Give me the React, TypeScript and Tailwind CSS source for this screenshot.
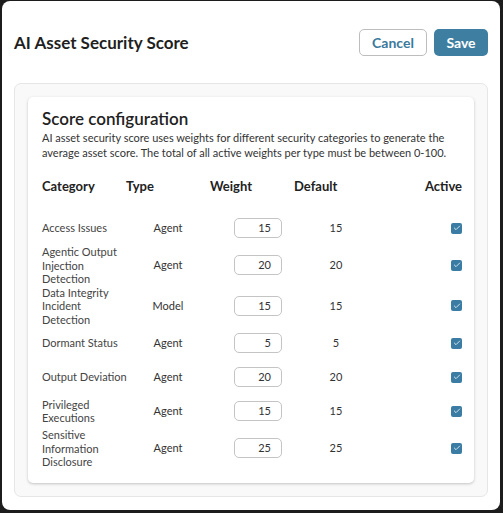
import { Check } from "lucide-react";

type Row = {
  category: string[];
  type: string;
  weight: number;
  def: number;
};

const rows: Row[] = [
  { category: ["Access Issues"], type: "Agent", weight: 15, def: 15 },
  { category: ["Agentic Output", "Injection", "Detection"], type: "Agent", weight: 20, def: 20 },
  { category: ["Data Integrity", "Incident", "Detection"], type: "Model", weight: 15, def: 15 },
  { category: ["Dormant Status"], type: "Agent", weight: 5, def: 5 },
  { category: ["Output Deviation"], type: "Agent", weight: 20, def: 20 },
  { category: ["Privileged", "Executions"], type: "Agent", weight: 15, def: 15 },
  { category: ["Sensitive", "Information", "Disclosure"], type: "Agent", weight: 25, def: 25 },
];

const App = () => {
  return (
    <div className="w-[503px] h-[513px] bg-[#1c1c1c] pl-[2px] pt-[1px] pr-[3px] pb-[3px] font-['Lato',sans-serif]">
      <div className="h-full w-full bg-white rounded-[8px] flex flex-col">
        {/* Header */}
        <div className="flex items-center justify-between pl-[12px] pr-[12px] pt-[28px]">
          <h1 className="text-[17px] font-bold text-[#1f1f1f]">AI Asset Security Score</h1>
          <div className="flex gap-[7px]">
            <button className="h-[27px] w-[68px] rounded-[5px] border border-[#bdbdbd] text-[14px] font-bold text-[#3b7a9c]">
              Cancel
            </button>
            <button className="h-[27px] w-[54px] rounded-[5px] bg-[#3e7fa1] text-[14px] font-bold text-white">
              Save
            </button>
          </div>
        </div>

        {/* Panel */}
        <div className="mx-[12px] mt-[27px] rounded-[7px] border border-[#e6e6e6] bg-[#f9f9f9] p-[13px]">
          <div className="rounded-[5px] bg-white px-[14px] pt-[11px] pb-[14px] shadow-[0_1px_3px_rgba(0,0,0,0.22)]">
            <h2 className="text-[17px] font-semibold leading-[21px] text-[#222]">Score configuration</h2>
            <p className="mt-[1px] text-[11px] leading-[15px] text-[#333]">
              AI asset security score uses weights for different security categories to generate the average asset
              score. The total of all active weights per type must be between 0-100.
            </p>

            {/* Table header */}
            <div className="mt-[18px] grid grid-cols-[84px_84px_84px_84px_84px] text-[13px] font-bold text-[#222] leading-[16px]">
              <div>Category</div>
              <div>Type</div>
              <div>Weight</div>
              <div>Default</div>
              <div className="text-right">Active</div>
            </div>

            <div className="mt-[17px] flex flex-col">
              {rows.map((r) => (
                <div
                  key={r.category.join(" ")}
                  className="grid min-h-[34px] grid-cols-[84px_84px_84px_84px_84px] items-center text-[11px] text-[#333]"
                >
                  <div className="leading-[13.5px] text-[#444] whitespace-nowrap">
                    {r.category.map((l) => (
                      <div key={l}>{l}</div>
                    ))}
                  </div>
                  <div className="text-center">{r.type}</div>
                  <div className="pl-[24px]">
                    <div className="flex h-[20px] w-[48px] items-center justify-end rounded-[5px] border border-[#c4c4c4] pr-[10px]">
                      {r.weight}
                    </div>
                  </div>
                  <div className="text-center">{r.def}</div>
                  <div className="flex justify-end">
                    <div className="flex h-[11px] w-[11px] items-center justify-center rounded-[2px] bg-[#3a7ca3]">
                      <Check className="h-[8px] w-[8px] text-[#cfe3ee]" strokeWidth={3} />
                    </div>
                  </div>
                </div>
              ))}
            </div>
          </div>
        </div>
      </div>
    </div>
  );
};

export default App;
